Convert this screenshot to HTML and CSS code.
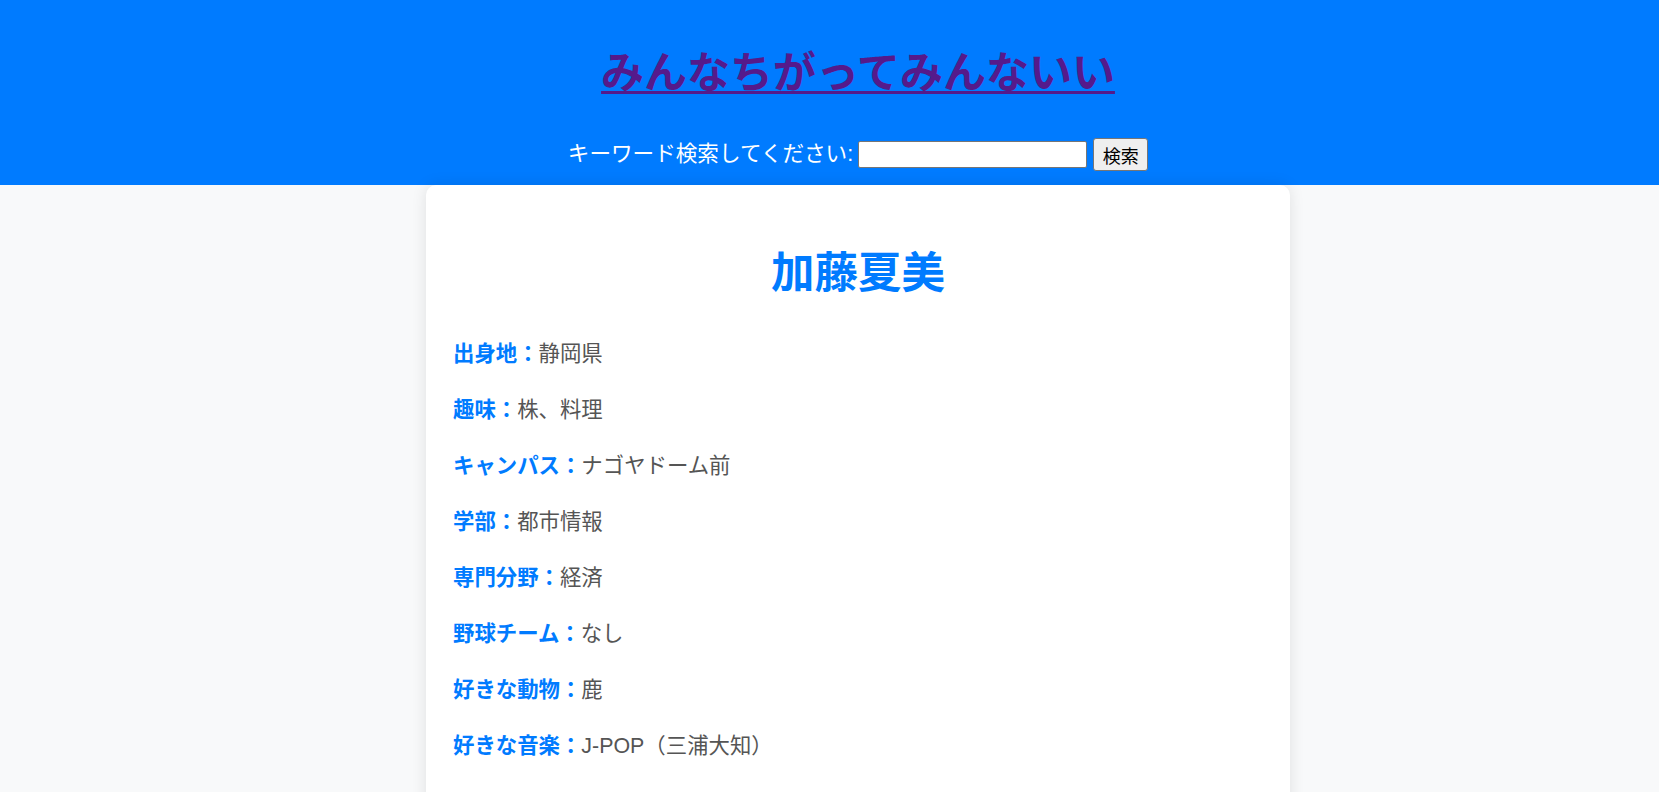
FILE: index.html
```html
<!DOCTYPE html>
<html lang="ja">
<head>
<meta charset="utf-8">
<title>みんなちがってみんないい</title>
<link rel="stylesheet" href="styles.css">
</head>
<body>
<div class="page">
  <header class="site-header">
    <h1 class="site-title"><a href="#">みんなちがってみんないい</a></h1>
    <form class="search" onsubmit="return false;">
      <label class="search-label" for="kw">キーワード検索してください:</label>
      <input class="search-input" id="kw" type="text">
      <button class="search-button" type="submit">検索</button>
    </form>
  </header>
  <main class="card">
    <h2 class="name">加藤夏美</h2>
    <p class="row"><span class="label">出身地：</span><span class="value">静岡県</span></p>
    <p class="row"><span class="label">趣味：</span><span class="value">株、料理</span></p>
    <p class="row"><span class="label">キャンパス：</span><span class="value">ナゴヤドーム前</span></p>
    <p class="row"><span class="label">学部：</span><span class="value">都市情報</span></p>
    <p class="row"><span class="label">専門分野：</span><span class="value">経済</span></p>
    <p class="row"><span class="label">野球チーム：</span><span class="value">なし</span></p>
    <p class="row"><span class="label">好きな動物：</span><span class="value">鹿</span></p>
    <p class="row"><span class="label">好きな音楽：</span><span class="value">J-POP（三浦大知）</span></p>
  </main>
</div>
</body>
</html>
```

FILE: styles.css
```css
html, body {
  margin: 0;
  padding: 0;
  overflow: hidden;
}
body {
  background: #f8f9fa;
  font-family: "Liberation Sans", "Noto Sans CJK JP", sans-serif;
  color: #444;
}
.page {
  width: 1716px;
}
.site-header {
  background: #007bff;
  padding: 20px 0 14px;
  text-align: center;
}
.site-title {
  margin: 29px 0 0;
  font-size: 43px;
  line-height: 48px;
  font-weight: bold;
}
.site-title a {
  color: #551a8b;
  text-decoration: underline;
  text-decoration-thickness: 3px;
  text-underline-offset: 3px;
}
.search {
  margin-top: 41px;
  display: flex;
  justify-content: center;
  align-items: center;
  height: 33px;
}
.search-label {
  color: #fff;
  font-size: 21.6px;
  line-height: 28px;
  margin-right: 5px;
  position: relative;
  top: -1px;
}
.search-input {
  width: 229px;
  height: 27px;
  box-sizing: border-box;
  border: 1px solid #767676;
  border-radius: 2px;
  background: #fff;
  margin: 0 6px 0 0;
  padding: 0 4px;
}
.search-button {
  width: 55px;
  height: 33px;
  box-sizing: border-box;
  border: 1px solid #767676;
  border-radius: 3px;
  background: #efefef;
  color: #000;
  font-family: "Liberation Sans", "Noto Sans CJK JP", sans-serif;
  font-size: 18px;
  padding: 0;
  margin: 0;
}
.card {
  display: block;
  width: 864px;
  box-sizing: border-box;
  margin: 0 auto;
  background: #fff;
  border-radius: 10px;
  box-shadow: 0 0 15px rgba(0, 0, 0, 0.1);
  padding: 20px 27px 30px;
}
.name {
  margin: 43px 0 38px;
  text-align: center;
  color: #007bff;
  font-size: 43.5px;
  line-height: 50px;
  font-weight: bold;
}
.row {
  margin: 20px 0;
  font-size: 21.4px;
  line-height: 36px;
}
.label {
  color: #007bff;
  font-weight: bold;
}
.value {
  color: #555;
}
```
